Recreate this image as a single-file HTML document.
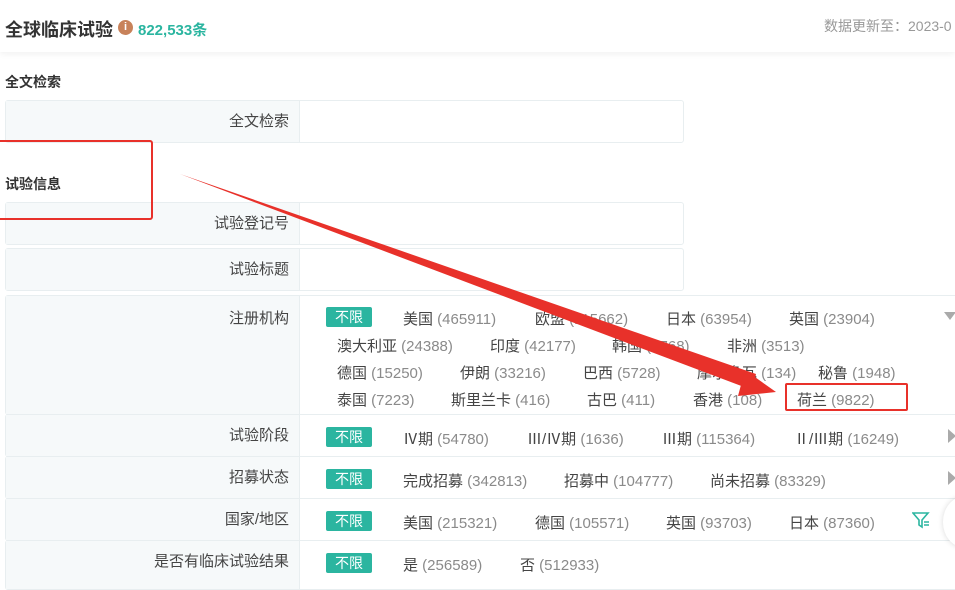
<!DOCTYPE html>
<html><head><meta charset="utf-8"><style>
*{margin:0;padding:0;box-sizing:border-box}
body{width:955px;height:585px;overflow:hidden;background:#fff;font-family:"Liberation Sans","Noto Sans CJK SC",sans-serif;position:relative;color:#333}
.a{position:absolute;white-space:nowrap}
.hdr{position:absolute;left:0;top:0;width:955px;height:52px;background:#fff;box-shadow:0 2px 6px rgba(0,0,0,.06)}
.sec{font-size:14px;font-weight:bold;color:#333}
.row{position:absolute;left:5px;width:960px;border:1px solid #e8eef0;border-radius:3px}
.lab{position:absolute;left:0;top:0;bottom:0;width:294px;background:#f6f9fa;border-right:1px solid #e8eef0;font-size:15px;color:#444;text-align:right;padding-right:10px}
.it{position:absolute;font-size:15px;color:#444;white-space:nowrap}
.it span{color:#8a8a8a}
.tag{position:absolute;left:326px;width:46px;height:20px;background:#2bb5a0;color:#fff;font-size:14px;text-align:center;line-height:20px;border-radius:2px}
</style></head><body>
<div class="hdr"></div>
<div class="a" style="left:5px;top:16px;font-size:18px;font-weight:bold;color:#333">全球临床试验</div>
<div class="a" style="left:118px;top:20px;width:15px;height:15px;border-radius:50%;background:#c8825a;color:#fff;font-size:11px;font-weight:bold;text-align:center;line-height:15px">i</div>
<div class="a" style="left:138px;top:19px;font-size:15px;font-weight:bold;color:#2bb5a0">822,533条</div>
<div class="a" style="left:824px;top:16px;font-size:14px;color:#999">数据更新至：2023-0</div>

<div class="a sec" style="left:5px;top:72px">全文检索</div>
<div class="row" style="top:100px;height:43px;width:679px"><div class="lab" style="line-height:41px">全文检索</div></div>

<div class="a sec" style="left:5px;top:174px">试验信息</div>
<div class="row" style="top:202px;height:43px;width:679px"><div class="lab" style="line-height:41px">试验登记号</div></div>
<div class="row" style="top:248px;height:43px;width:679px"><div class="lab" style="line-height:41px">试验标题</div></div>

<div class="row" style="top:295px;height:120px"><div class="lab" style="padding-top:11px">注册机构</div></div>
<div class="row" style="top:414px;height:43px"><div class="lab" style="line-height:41px">试验阶段</div></div>
<div class="row" style="top:456px;height:43px"><div class="lab" style="line-height:41px">招募状态</div></div>
<div class="row" style="top:498px;height:43px"><div class="lab" style="line-height:41px">国家/地区</div></div>
<div class="row" style="top:540px;height:50px"><div class="lab" style="line-height:41px">是否有临床试验结果</div></div>

<div class="tag" style="top:307px">不限</div>
<div class="it" style="left:403px;top:308px">美国 <span>(465911)</span></div>
<div class="it" style="left:535px;top:308px">欧盟 <span>(115662)</span></div>
<div class="it" style="left:666px;top:308px">日本 <span>(63954)</span></div>
<div class="it" style="left:789px;top:308px">英国 <span>(23904)</span></div>
<div class="a" style="left:944px;top:312px;border-left:6px solid transparent;border-right:6px solid transparent;border-top:8px solid #aaa"></div>
<div class="it" style="left:337px;top:335px">澳大利亚 <span>(24388)</span></div>
<div class="it" style="left:490px;top:335px">印度 <span>(42177)</span></div>
<div class="it" style="left:612px;top:335px">韩国 <span>(8768)</span></div>
<div class="it" style="left:727px;top:335px">非洲 <span>(3513)</span></div>
<div class="it" style="left:337px;top:362px">德国 <span>(15250)</span></div>
<div class="it" style="left:460px;top:362px">伊朗 <span>(33216)</span></div>
<div class="it" style="left:583px;top:362px">巴西 <span>(5728)</span></div>
<div class="it" style="left:697px;top:362px">摩尔多瓦 <span>(134)</span></div>
<div class="it" style="left:818px;top:362px">秘鲁 <span>(1948)</span></div>
<div class="it" style="left:337px;top:389px">泰国 <span>(7223)</span></div>
<div class="it" style="left:451px;top:389px">斯里兰卡 <span>(416)</span></div>
<div class="it" style="left:587px;top:389px">古巴 <span>(411)</span></div>
<div class="it" style="left:693px;top:389px">香港 <span>(108)</span></div>
<div class="it" style="left:797px;top:389px">荷兰 <span>(9822)</span></div>

<div class="tag" style="top:427px">不限</div>
<div class="it" style="left:403px;top:428px">Ⅳ期 <span>(54780)</span></div>
<div class="it" style="left:527px;top:428px">Ⅲ/Ⅳ期 <span>(1636)</span></div>
<div class="it" style="left:662px;top:428px">Ⅲ期 <span>(115364)</span></div>
<div class="it" style="left:794px;top:428px">Ⅱ/Ⅲ期 <span>(16249)</span></div>
<div class="a" style="left:948px;top:429px;border-top:7px solid transparent;border-bottom:7px solid transparent;border-left:8px solid #aaa"></div>

<div class="tag" style="top:469px">不限</div>
<div class="it" style="left:403px;top:470px">完成招募 <span>(342813)</span></div>
<div class="it" style="left:564px;top:470px">招募中 <span>(104777)</span></div>
<div class="it" style="left:710px;top:470px">尚未招募 <span>(83329)</span></div>
<div class="a" style="left:948px;top:471px;border-top:7px solid transparent;border-bottom:7px solid transparent;border-left:8px solid #aaa"></div>

<div class="tag" style="top:511px">不限</div>
<div class="it" style="left:403px;top:512px">美国 <span>(215321)</span></div>
<div class="it" style="left:535px;top:512px">德国 <span>(105571)</span></div>
<div class="it" style="left:666px;top:512px">英国 <span>(93703)</span></div>
<div class="it" style="left:789px;top:512px">日本 <span>(87360)</span></div>
<svg class="a" style="left:912px;top:511px" width="20" height="18" viewBox="0 0 20 18"><path d="M1 2h15l-6 7v7l-3-2V9z" fill="none" stroke="#2bb5a0" stroke-width="1.6"/><path d="M12 11h5M12 14h5" stroke="#2bb5a0" stroke-width="1.4"/></svg>
<div class="a" style="left:943px;top:497px;width:40px;height:50px;border-radius:50%;background:#fff;box-shadow:0 0 6px rgba(0,0,0,.15)"></div>

<div class="tag" style="top:553px">不限</div>
<div class="it" style="left:403px;top:554px">是 <span>(256589)</span></div>
<div class="it" style="left:520px;top:554px">否 <span>(512933)</span></div>

<div class="a" style="left:-4px;top:140px;width:157px;height:80px;border:2.5px solid #e8312a;border-radius:3px"></div>
<div class="a" style="left:785px;top:383px;width:123px;height:28px;border:2.5px solid #e8312a;border-radius:2px"></div>
<svg class="a" style="left:0;top:0" width="955" height="585"><polygon points="180,174 756,374 752,390" fill="#e8312a"/><polygon points="745,370 776,392 738,396" fill="#e8312a"/></svg>
</body></html>
